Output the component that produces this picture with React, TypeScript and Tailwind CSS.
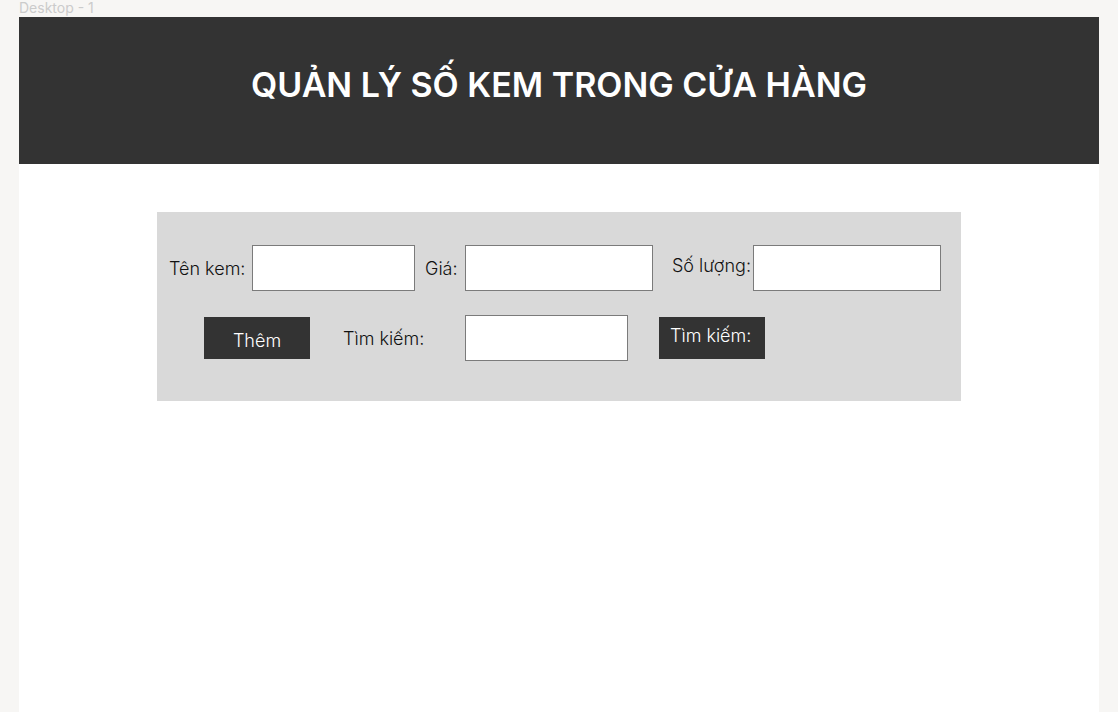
import React from 'react';

const Field: React.FC<{ w: string }> = ({ w }) => (
  <input type="text" className={`${w} h-[46px] bg-white border border-[#7b7b7b] outline-none`} />
);

export default function App() {
  return (
    <div className="h-[712px] bg-[#f7f6f4] px-[19px] pt-[17px] relative font-['Inter',sans-serif] overflow-hidden">
      <div className="absolute left-[19px] top-0 text-[14px] leading-[15px] text-[#cbcbcb]">Desktop - 1</div>
      <div className="bg-white h-[720px]">
        <header className="h-[147px] bg-[#333333] flex justify-center pt-[47px]">
          <h1 className="text-white text-[34px] leading-[41px] font-semibold">
            QUẢN LÝ SỐ KEM TRONG CỬA HÀNG
          </h1>
        </header>

        <div className="mx-auto mt-[48px] w-[804px] h-[189px] bg-[#d9d9d9] pt-[33px]">
          <div className="flex items-center text-[18px] font-light text-[#111]">
            <span className="ml-[12px] w-[83px]">Tên kem:</span>
            <Field w="w-[163px]" />
            <span className="ml-[10px] w-[40px]">Giá:</span>
            <Field w="w-[188px]" />
            <span className="ml-[19px] w-[81px] -mt-[5px]">Số lượng:</span>
            <Field w="w-[188px]" />
          </div>

          <div className="flex items-center mt-[24px] text-[18px] font-light text-[#111]">
            <button className="ml-[47px] w-[106px] h-[42px] bg-[#333333] text-white pt-[4px]">
              Thêm
            </button>
            <span className="ml-[33px] w-[122px]">Tìm kiếm:</span>
            <Field w="w-[163px]" />
            <button className="ml-[31px] w-[106px] h-[42px] bg-[#333333] text-white text-left pl-[11px] pb-[5px]">
              Tìm kiếm:
            </button>
          </div>
        </div>
      </div>
    </div>
  );
}
